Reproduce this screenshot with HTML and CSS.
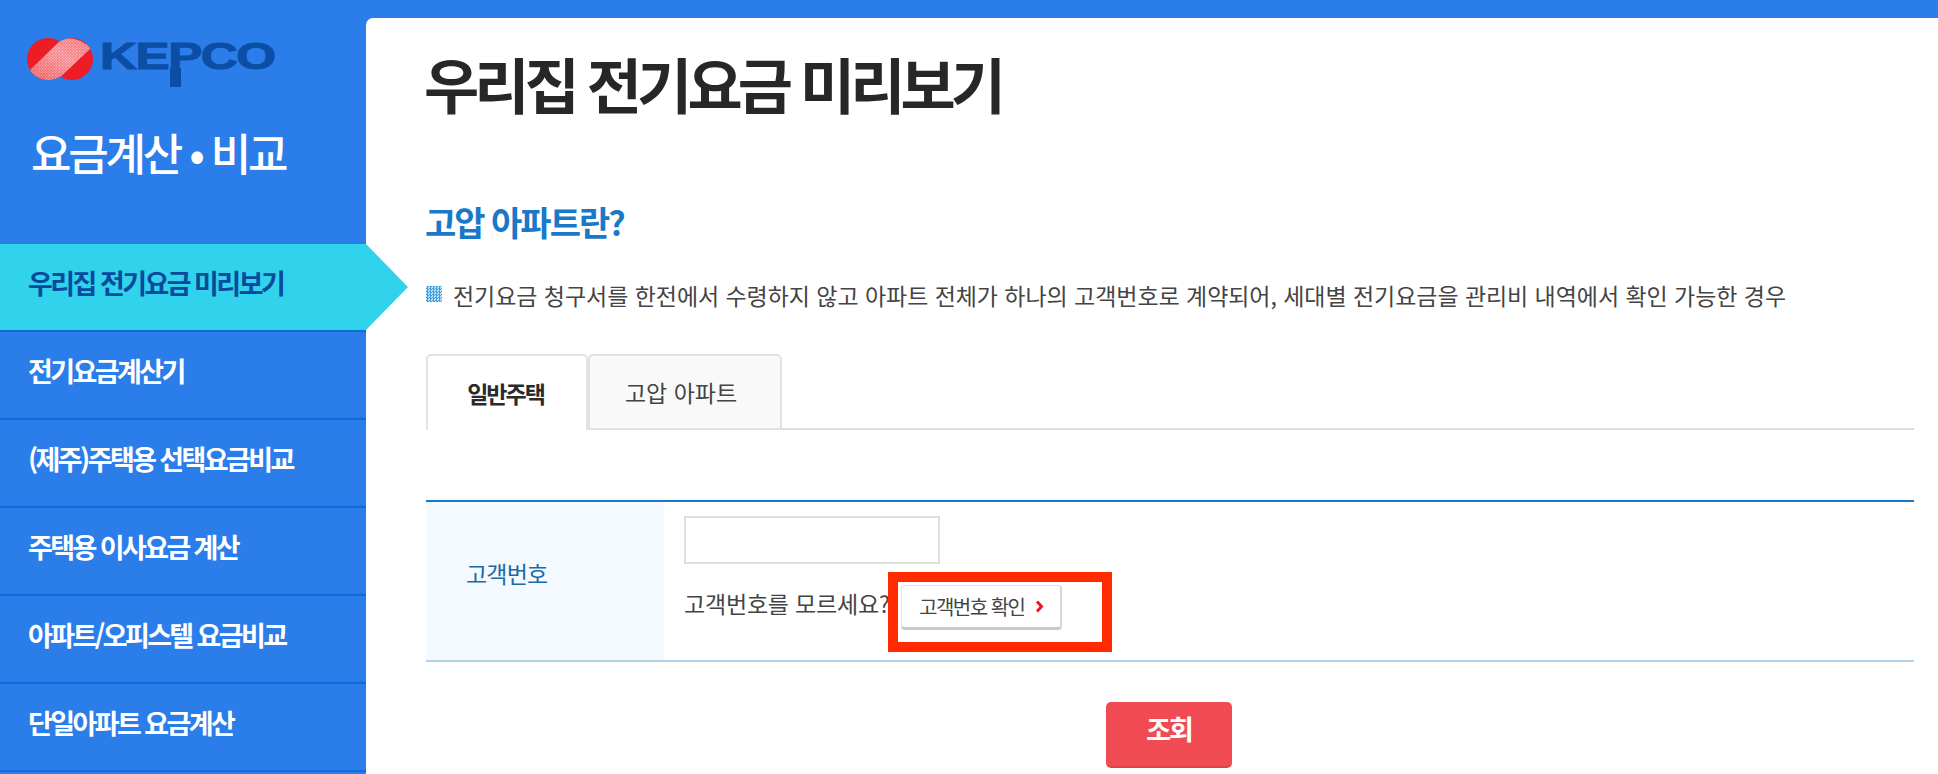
FILE: index.html
```html
<!DOCTYPE html>
<html lang="ko">
<head>
<meta charset="utf-8">
<title>우리집 전기요금 미리보기</title>
<link rel="stylesheet" href="styles.css">
</head>
<body>
<div class="app">
  <aside class="sidebar">
    <div class="logo">
      <svg class="logo-mark" width="66" height="42" viewBox="0 0 66 42">
        <defs>
          <pattern id="chk" width="2" height="2" patternUnits="userSpaceOnUse" patternTransform="rotate(45)">
            <rect width="2" height="2" fill="#f26a6e" fill-opacity=".55"/>
            <rect width="1" height="1" fill="#fff" fill-opacity=".55"/>
          </pattern>
          <linearGradient id="band" x1="0" y1="1" x2="1" y2="0">
            <stop offset="0" stop-color="#ef3a40"/>
            <stop offset=".55" stop-color="#f8b6b4"/>
            <stop offset="1" stop-color="#f27c7e"/>
          </linearGradient>
          <clipPath id="rings">
            <circle cx="21" cy="21" r="21"/>
            <circle cx="45" cy="21" r="21"/>
          </clipPath>
        </defs>
        <circle cx="21" cy="21" r="21" fill="#ee1c25"/>
        <circle cx="45" cy="21" r="21" fill="#ee1c25"/>
        <g clip-path="url(#rings)">
          <path d="M2 33 L34 2 Q48 -3 64 10 L30 42 Q12 44 2 33Z" fill="url(#band)"/>
          <path d="M2 33 L34 2 Q48 -3 64 10 L30 42 Q12 44 2 33Z" fill="url(#chk)"/>
        </g>
      </svg>
      <span class="logo-text">KEPCO</span>
    </div>
    <div class="brand">요금계산 • 비교</div>
    <nav class="menu">
      <a class="item active">우리집 전기요금 미리보기</a>
      <a class="item">전기요금계산기</a>
      <a class="item">(제주)주택용 선택요금비교</a>
      <a class="item">주택용 이사요금 계산</a>
      <a class="item">아파트/오피스텔 요금비교</a>
      <a class="item">단일아파트 요금계산</a>
    </nav>
  </aside>
  <main class="panel">
    <h1 class="title">우리집 전기요금 미리보기</h1>
    <h2 class="sub">고압 아파트란?</h2>
    <p class="desc"><span class="bullet"></span>전기요금 청구서를 한전에서 수령하지 않고 아파트 전체가 하나의 고객번호로 계약되어, 세대별 전기요금을 관리비 내역에서 확인 가능한 경우</p>
    <div class="tabs">
      <div class="tab on">일반주택</div>
      <div class="tab">고압 아파트</div>
    </div>
    <div class="table">
      <div class="th">고객번호</div>
      <div class="td">
        <input class="field" type="text">
        <div class="help">
          <span class="help-text">고객번호를 모르세요?</span>
          <span class="check">고객번호 확인<svg class="chev" width="9" height="13" viewBox="0 0 9 13"><path d="M2 1.5 L6.5 6.5 L2 11.5" fill="none" stroke="#e8192c" stroke-width="3"/></svg></span>
          <span class="mark"></span>
        </div>
      </div>
    </div>
    <div class="actions"><button class="go">조회</button></div>
  </main>
</div>
</body>
</html>
```
FILE: styles.css
```css
* { box-sizing: border-box; }
html, body { margin: 0; height: 100%; }
body {
  background: #2b7de9;
  font-family: "Noto Sans CJK KR", "Noto Sans", sans-serif;
  overflow: hidden;
}
.app { display: flex; height: 774px; padding-top: 18px; }
.sidebar { width: 366px; flex: none; margin-top: -18px; }
.logo { position: relative; display: flex; height: 52px; margin-top: 38px; padding-left: 27px; }
.logo::after {
  content: "";
  position: absolute;
  left: 170px;
  top: 30px;
  width: 11px;
  height: 19px;
  background: #0b4ea5;
}
.logo-mark { flex: none; width: 66px; height: 42px; }
.logo-text {
  display: block;
  margin: 0 0 0 7px;
  color: #0b4ea5;
  font: 700 36px/38px "Liberation Sans", sans-serif;
  -webkit-text-stroke: 1px #0b4ea5;
  letter-spacing: -1px;
  transform: scaleX(1.42);
  transform-origin: left center;
}
.brand {
  margin-top: 37px;
  padding-left: 31px;
  color: #fff;
  font-size: 44px;
  line-height: 50px;
  font-weight: 500;
  letter-spacing: -3.2px;
  white-space: nowrap;
}
.menu { margin-top: 67px; }
.item {
  display: flex;
  align-items: center;
  height: 88px;
  padding: 0 0 10px 28px;
  color: #fff;
  font-size: 27px;
  font-weight: 700;
  letter-spacing: -2.6px;
  border-bottom: 2px solid #1269dc;
  box-shadow: inset 0 -1px 0 #2b7de9;
}
.item.active {
  position: relative;
  color: #0a4a9c;
  background: #31d3ec;
  box-shadow: none;
  letter-spacing: -2.55px;
}
.item.active::after {
  content: "";
  position: absolute;
  left: 366px;
  top: 0;
  border-left: 42px solid #31d3ec;
  border-top: 43px solid transparent;
  border-bottom: 43px solid transparent;
}
.panel {
  flex: 1;
  background: #fff;
  border-radius: 7px 0 0 0;
  padding: 0 24px 0 58px;
  min-width: 0;
}
.title {
  margin: 27px 0 0;
  color: #272727;
  font-size: 60px;
  line-height: 76px;
  font-weight: 700;
  letter-spacing: -4.9px;
  white-space: nowrap;
}
.sub {
  margin: 79px 0 0 1px;
  color: #1a78c8;
  font-size: 34px;
  line-height: 44px;
  font-weight: 700;
  letter-spacing: -2px;
}
.desc {
  display: flex;
  align-items: center;
  margin: 34px 0 0;
  color: #444;
  font-size: 23px;
  line-height: 34px;
  letter-spacing: -0.05px;
  white-space: nowrap;
}
.bullet {
  flex: none;
  width: 16px;
  height: 16px;
  margin: -3px 11px 0 2px;
  background-image: repeating-conic-gradient(#3f9fe0 0 25%, #bfe2f6 0 50%);
  background-size: 3px 3px;
}
.tabs {
  display: flex;
  height: 76px;
  margin-top: 42px;
  margin-left: 2px;
  border-bottom: 2px solid #dcdcdc;
}
.tab {
  width: 194px;
  height: 76px;
  padding-right: 8px;
  display: flex;
  align-items: center;
  justify-content: center;
  color: #444;
  font-size: 23px;
  background: #f9f9f9;
  border: 2px solid #e2e2e2;
  border-radius: 5px 5px 0 0;
}
.tab.on {
  width: 162px;
  padding-right: 3px;
  color: #2a2a2a;
  font-weight: 700;
  letter-spacing: -2px;
  background: #fff;
  border-bottom: 0;
}
.table {
  display: flex;
  height: 162px;
  margin-top: 70px;
  margin-left: 2px;
  border-top: 2px solid #1a78c8;
  border-bottom: 2px solid #b3d1e9;
}
.th {
  width: 238px;
  flex: none;
  padding: 0 0 16px 40px;
  display: flex;
  align-items: center;
  color: #1a6aa8;
  font-size: 23px;
  letter-spacing: -0.8px;
  background: #f3f9fe;
}
.td { flex: 1; padding: 14px 0 0 20px; }
.field {
  display: block;
  width: 256px;
  height: 48px;
  border: 2px solid #e0e0e0;
  background: #fff;
  outline: 0;
}
.help { position: relative; display: flex; align-items: center; margin-top: 21px; height: 45px; }
.help-text {
  flex: none;
  width: 217px;
  margin-top: -9px;
  color: #444;
  font-size: 23px;
  letter-spacing: -0.2px;
  white-space: nowrap;
}
.check {
  display: flex;
  align-items: center;
  padding-left: 17px;
  width: 161px;
  height: 45px;
  color: #444;
  font-size: 20px;
  letter-spacing: -1.5px;
  white-space: nowrap;
  background: #fff;
  border: 1px solid #e2e2e2;
  border-bottom: 3px solid #c8c8c8;
  border-right: 2px solid #d6d6d6;
  border-radius: 4px;
}
.chev { margin-left: 10px; flex: none; }
.mark {
  position: absolute;
  left: 204px;
  top: -13px;
  width: 224px;
  height: 80px;
  border: 10px solid #ff2a00;
}
.actions { display: flex; margin-top: 40px; padding-left: 682px; }
.go {
  width: 126px;
  height: 66px;
  border: 0;
  border-bottom: 2px solid #e0424a;
  border-radius: 5px;
  background: #f04a53;
  color: #fff;
  font: 700 27px "Noto Sans CJK KR", sans-serif;
  letter-spacing: -2px;
  padding-bottom: 13px;
}
```
